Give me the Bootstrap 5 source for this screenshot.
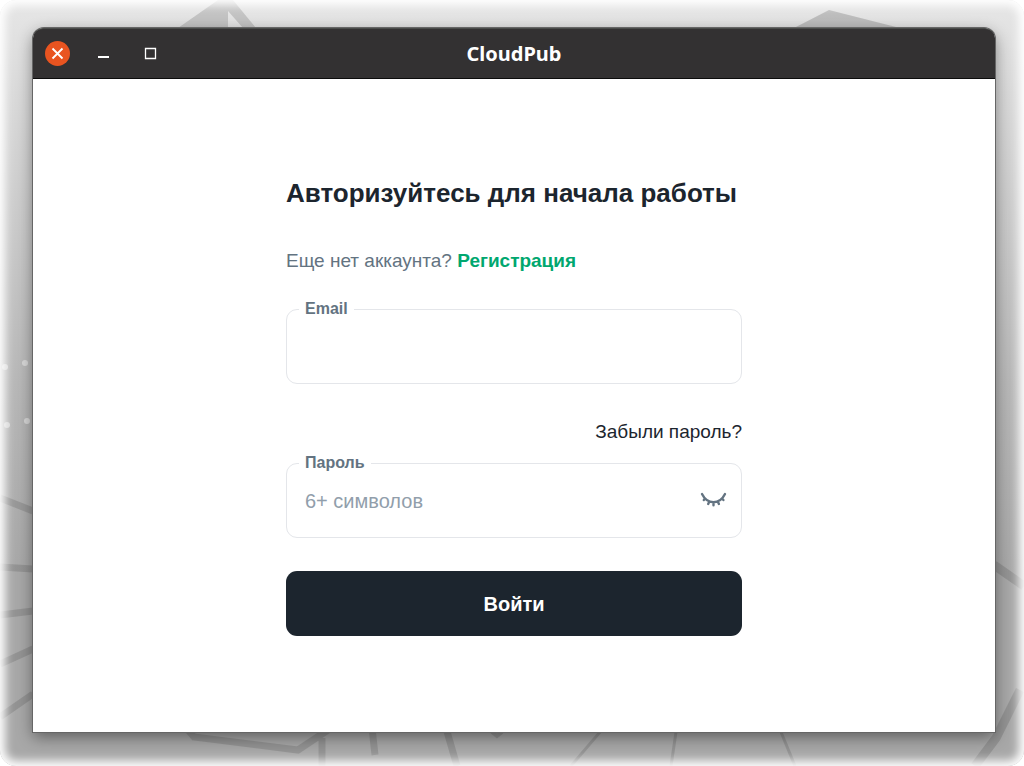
<!DOCTYPE html>
<html lang="ru">
<head>
<meta charset="utf-8">
<meta name="viewport" content="width=device-width, initial-scale=1">
<title>CloudPub</title>
<link href="https://cdn.jsdelivr.net/npm/bootstrap@5.3.0/dist/css/bootstrap.min.css" rel="stylesheet">
<style>
  body { font-family: "Liberation Sans", Arial, sans-serif; color: #1c252e; background: #fff; }
  .desktop { isolation: isolate; padding: 28px 29px 34px 33px; }
  .wallpaper { z-index: -1; background: linear-gradient(#e6e6e6 0, #dadada 12%, #b8b8b8 50%, #a8a8a8 75%, #a8a8a8 100%); }
  .wallpaper svg { display: block; }
  .vignette { z-index: -1; box-shadow: inset 0 0 10px 5px #fff; border-radius: 16px; outline: 16px solid #fff; }
  .app-window { border-radius: 11px 11px 0 0; box-shadow: 0 0 0 1px #666, 0 5px 16px rgba(0,0,0,.45); }
  .titlebar { height: 51px; background: #333132; border-top: 1px solid #4a4c4a; border-bottom: 1px solid #0c0c0c; border-radius: 10px 10px 0 0; }
  .window-title { font-family: "Noto Sans", sans-serif; font-size: 20px; line-height: 28px; color: #fff; }
  .window-controls { gap: 21px; padding-left: 12px; }
  .window-controls button { width: 25px; height: 25px; padding: 0; border: 0; background: none; }
  .window-controls button svg { display: block; }
  .login-form { width: 456px; max-width: 100%; }
  .login-title { font-size: 26px; line-height: 36px; margin-bottom: 36px; }
  .text-line { font-size: 19px; line-height: 28px; }
  .signup-line { color: #637381; margin-bottom: 34px; }
  .signup-link { color: #00a76f; }
  .forgot-line { margin: 34px 0 17px; }
  .forgot-link { color: #1c252e; }
  .field { height: 75px; }
  .field .form-control { border: 1px solid #e4e6ea; border-radius: 11px; padding: 2px 60px 0 18px; font-size: 20px; color: #1c252e; }
  .field .form-control::placeholder { color: #919eab; opacity: 1; }
  .field label { left: 13px; top: -10px; padding: 0 6px; background: #fff; color: #637381; font-size: 16px; line-height: 20px; }
  .eye-button { top: 21px; right: 12px; width: 32px; height: 32px; color: #637381; }
  .submit-button { height: 65px; border-radius: 11px; font-size: 20px; color: #fff; background: #1c252e; margin-top: 33px; }
  .submit-button:hover { color: #fff; background: #454f5b; }
</style>
</head>
<body>
<div class="desktop position-relative d-flex flex-column min-vh-100 overflow-hidden">
  <div class="wallpaper position-absolute top-0 start-0 w-100 h-100">
    <svg width="100%" height="100%" viewBox="0 0 1024 766" preserveAspectRatio="none" aria-hidden="true">
      <path d="M178 28 218 0H233L256 28H243L228 11V28Z" fill="#000" fill-opacity=".14"/>
      <path d="M794 28 829 10 900 28Z" fill="#000" fill-opacity=".17"/>
      <g stroke="#000" stroke-opacity=".12" stroke-width="7" fill="none">
        <path d="M0 498 33 511M0 567 33 569M0 615 33 611M0 664 33 649M0 717 33 694"/>
        <path d="M188 730 194 737 298 750 328 730M322 738V766M372 728 375 755M446 728 457 766"/>
        <path d="M994 565 1024 586M1020 690 996 738 975 766" stroke-width="9"/>
        <path d="M600 732 571 766M676 732 671 766M781 732 795 766" stroke-width="3"/>
        <path d="M492 732 497 736 502 732" stroke-width="4"/>
      </g>
      <g fill="#fff" fill-opacity=".45"><circle cx="5" cy="367" r="3"/><circle cx="25" cy="363" r="3"/><circle cx="7" cy="425" r="3"/><circle cx="27" cy="421" r="3"/></g>
    </svg>
  </div>
  <div class="vignette position-absolute top-0 start-0 w-100 h-100"></div>

  <div class="app-window bg-white d-flex flex-column flex-grow-1">
    <header class="titlebar position-relative d-flex align-items-center justify-content-center">
      <div class="window-controls position-absolute start-0 d-flex">
        <button type="button" aria-label="Закрыть">
          <svg width="25" height="25" viewBox="0 0 25 25"><circle cx="12.500" cy="12.500" r="12.500" fill="#e95420"/><path d="m7.500 7.500 10 10m0-10-10 10" stroke="#fff" stroke-width="1.800"/></svg>
        </button>
        <button type="button" aria-label="Свернуть">
          <svg width="25" height="25" viewBox="0 0 25 25"><path d="M7 16h11" stroke="#fff" stroke-width="2"/></svg>
        </button>
        <button type="button" aria-label="Развернуть">
          <svg width="25" height="25" viewBox="0 0 25 25"><path d="M8.500 7.500h10v10h-10z" fill="none" stroke="#fff" stroke-width="1.300"/></svg>
        </button>
      </div>
      <div class="window-title fw-bold">CloudPub</div>
    </header>

    <main class="flex-grow-1 d-flex justify-content-center align-items-center">
      <form class="login-form">
        <h1 class="login-title fw-bold">Авторизуйтесь для начала работы</h1>
        <p class="text-line signup-line">Еще нет аккаунта? <a class="signup-link fw-bold text-decoration-none" href="#">Регистрация</a></p>
        <div class="field position-relative">
          <input class="form-control h-100" type="email" id="email">
          <label class="position-absolute fw-bold" for="email">Email</label>
        </div>
        <div class="forgot-line text-line text-end"><a class="forgot-link text-decoration-none" href="#">Забыли пароль?</a></div>
        <div class="field position-relative">
          <input class="form-control h-100" type="password" id="password" placeholder="6+ символов">
          <label class="position-absolute fw-bold" for="password">Пароль</label>
          <button class="eye-button btn p-0 border-0 position-absolute" type="button" aria-label="Показать пароль">
            <svg class="d-block" width="32" height="32" viewBox="0 0 32 32" fill="none" stroke="currentColor" stroke-width="2.400" stroke-linecap="round"><path d="M4 10C9.500 21 21.500 21 27 10M7 14.500 5.800 16M11.200 17.700 10.200 20M15.500 18.700V21.300M19.900 17.700 20.900 20M24 14.500 25.400 16"/></svg>
          </button>
        </div>
        <button class="submit-button btn border-0 w-100 fw-bold" type="submit">Войти</button>
      </form>
    </main>
  </div>
</div>
<script src="https://cdn.jsdelivr.net/npm/bootstrap@5.3.0/dist/js/bootstrap.bundle.min.js"></script>
</body>
</html>
